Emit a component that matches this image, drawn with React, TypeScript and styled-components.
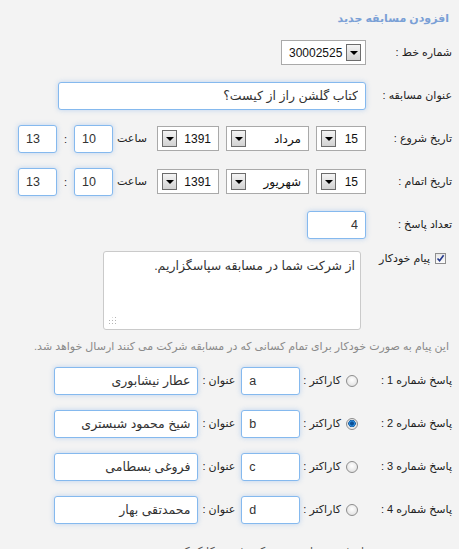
import React from 'react';
import styled, { createGlobalStyle } from 'styled-components';

const GlobalStyle = createGlobalStyle`
  html, body {
    margin: 0;
    padding: 0;
    background: #f3f3f3;
  }
  body {
    font-family: "Liberation Sans", "DejaVu Sans", sans-serif;
  }
`;

const Page = styled.div`
  direction: rtl;
  width: 459px;
  height: 549px;
  overflow: hidden;
  box-sizing: border-box;
  padding-right: 7px;
  color: #222;
`;

const Title = styled.h2`
  margin: 0;
  height: 31px;
  box-sizing: border-box;
  display: flex;
  align-items: center;
  padding: 6px 3px 0 0;
  font-size: 11px;
  font-weight: bold;
  color: #7aa0d6;
`;

const Row = styled.div<{ $top?: boolean }>`
  display: flex;
  align-items: ${(p) => (p.$top ? 'flex-start' : 'center')};
  height: ${(p) => (p.$top ? 'auto' : '43px')};
`;

const Label = styled.div`
  width: 78px;
  margin-left: 8px;
  flex: none;
  font-size: 11px;
  white-space: nowrap;
`;

const Controls = styled.div<{ $gap?: number }>`
  display: flex;
  align-items: center;
  gap: ${(p) => p.$gap ?? 7}px;
`;

const SelectBox = styled.div<{ $w: number; $ltr?: boolean }>`
  width: ${(p) => p.$w}px;
  height: 25px;
  box-sizing: border-box;
  border: 1px solid #a9a9a9;
  background: #fff;
  display: flex;
  align-items: center;
  padding: 0 4px;
  direction: ${(p) => (p.$ltr ? 'ltr' : 'rtl')};
`;

const SelectText = styled.span<{ $ltr?: boolean }>`
  flex: 1;
  font-size: 12px;
  color: #111;
  padding: ${(p) => (p.$ltr ? '0 0 0 3px' : '0 3px 0 0')};
  white-space: nowrap;
`;

const ArrowBtn = styled.span`
  width: 15px;
  height: 17px;
  flex: none;
  box-sizing: border-box;
  border: 1px solid #6c6c6c;
  background: linear-gradient(#f4f4f4, #d2d2d2);
  display: flex;
  align-items: center;
  justify-content: center;
  &::after {
    content: '';
    border-left: 4px solid transparent;
    border-right: 4px solid transparent;
    border-top: 4px solid #000;
    margin-top: 1px;
  }
`;

const Field = styled.input<{ $w: number; $ltr?: boolean }>`
  width: ${(p) => p.$w}px;
  height: 28px;
  box-sizing: border-box;
  border: 1px solid #85b9ee;
  border-radius: 3px;
  background: #fff;
  box-shadow: 0 0 5px rgba(120, 170, 235, 0.45);
  font-family: inherit;
  font-size: 12.5px;
  color: #333;
  padding: 0 7px;
  direction: ${(p) => (p.$ltr ? 'ltr' : 'rtl')};
  outline: none;
  flex: none;
`;

const Text = styled.span<{ $mr?: number; $ml?: number }>`
  font-size: 11px;
  white-space: nowrap;
  margin-right: ${(p) => p.$mr ?? 0}px;
  margin-left: ${(p) => p.$ml ?? 0}px;
`;

const CheckLabel = styled.label`
  width: 80px;
  flex: none;
  display: flex;
  align-items: center;
  gap: 5px;
  font-size: 11px;
  padding: 6px 6px 0 0;
`;

const CheckBox = styled.span`
  width: 11px;
  height: 11px;
  box-sizing: border-box;
  border: 1px solid #8e8e8e;
  background: linear-gradient(#e8e8e8, #fbfbfb);
  display: flex;
  align-items: center;
  justify-content: center;
`;

const AreaWrap = styled.div`
  position: relative;
  margin-right: 5px;
  margin-top: 5px;
`;

const Area = styled.textarea`
  display: block;
  width: 258px;
  height: 79px;
  box-sizing: border-box;
  border: 1px solid #cacaca;
  border-radius: 3px;
  background: #fff;
  resize: none;
  font-family: inherit;
  font-size: 12.5px;
  color: #333;
  padding: 6px 5px;
  direction: rtl;
  outline: none;
`;

const Grip = styled.span`
  position: absolute;
  left: 5px;
  bottom: 5px;
  width: 9px;
  height: 9px;
  background-image: radial-gradient(circle, #b4b4b4 0.8px, transparent 1px);
  background-size: 3px 3px;
  clip-path: polygon(100% 0, 100% 100%, 0 100%, 0 33%);
`;

const Hint = styled.p`
  margin: 10px 3px 0 0;
  height: 19px;
  font-size: 11px;
  color: #8a8a8a;
  white-space: nowrap;
`;

const Radio = styled.span<{ $on?: boolean }>`
  width: 12px;
  height: 12px;
  flex: none;
  box-sizing: border-box;
  border-radius: 50%;
  border: 1px solid #8d8d8d;
  margin-right: 8px;
  background: ${(p) =>
    p.$on
      ? 'radial-gradient(circle at 50% 45%, #0b4f96 0 1.5px, #2c8fe0 2.5px, #1f5d9c 3.5px, #e6e6e6 4px, #fafafa 100%)'
      : 'radial-gradient(circle at 50% 40%, #ffffff 0, #dadada 100%)'};
`;

const Footer = styled.p`
  margin: 14px 0 0;
  padding-left: 90px;
  font-size: 11px;
  color: #555;
  text-align: center;
  white-space: nowrap;
`;

function Select({ w, value, ltr }: { w: number; value: string; ltr?: boolean }) {
  return (
    <SelectBox $w={w} $ltr={ltr}>
      <SelectText $ltr={ltr}>{value}</SelectText>
      <ArrowBtn />
    </SelectBox>
  );
}

function DateRow({ label, month }: { label: string; month: string }) {
  return (
    <Row>
      <Label>{label}</Label>
      <Controls>
        <Select w={50} value="15" />
        <Select w={83} value={month} />
        <Select w={62} value="1391" />
        <Text $mr={3} $ml={-3}>ساعت</Text>
        <Field $w={39} $ltr readOnly value="10" />
        <Text>:</Text>
        <Field $w={39} $ltr readOnly value="13" />
      </Controls>
    </Row>
  );
}

const answers = [
  { n: 1, ch: 'a', title: 'عطار نیشابوری', on: false },
  { n: 2, ch: 'b', title: 'شیخ محمود شبستری', on: true },
  { n: 3, ch: 'c', title: 'فروغی بسطامی', on: false },
  { n: 4, ch: 'd', title: 'محمدتقی بهار', on: false },
];

export default function App() {
  return (
    <Page>
      <GlobalStyle />
      <Title>افزودن مسابقه جدید</Title>

      <Row>
        <Label>شماره خط :</Label>
        <Select w={85} value="30002525" ltr />
      </Row>

      <Row>
        <Label>عنوان مسابقه :</Label>
        <Field $w={308} readOnly value="کتاب گلشن راز از کیست؟" />
      </Row>

      <DateRow label="تاریخ شروع :" month="مرداد" />
      <DateRow label="تاریخ اتمام :" month="شهریور" />

      <Row>
        <Label>تعداد پاسخ :</Label>
        <Field $w={59} readOnly value="4" />
      </Row>

      <Row $top>
        <CheckLabel>
          <CheckBox>
            <svg width="9" height="9" viewBox="0 0 9 9">
              <path d="M1.5 4.5 L3.6 6.8 L7.6 1.2" fill="none" stroke="#25398c" strokeWidth="1.6" />
            </svg>
          </CheckBox>
          پیام خودکار
        </CheckLabel>
        <AreaWrap>
          <Area readOnly value="از شرکت شما در مسابقه سپاسگزاریم." />
          <Grip />
        </AreaWrap>
      </Row>

      <Hint>این پیام به صورت خودکار برای تمام کسانی که در مسابقه شرکت می کنند ارسال خواهد شد.</Hint>

      {answers.map((a) => (
        <Row key={a.n}>
          <Label>پاسخ شماره {a.n} :</Label>
          <Controls $gap={0}>
            <Radio $on={a.on} />
            <Text $mr={5} $ml={3}>کاراکتر :</Text>
            <Field $w={59} $ltr readOnly value={a.ch} />
            <Text $mr={6} $ml={4}>عنوان :</Text>
            <Field $w={144} readOnly value={a.title} />
          </Controls>
        </Row>
      ))}

      <Footer>برای ثبت مسابقه روی دکمه ذخیره کلیک کنید.</Footer>
    </Page>
  );
}
